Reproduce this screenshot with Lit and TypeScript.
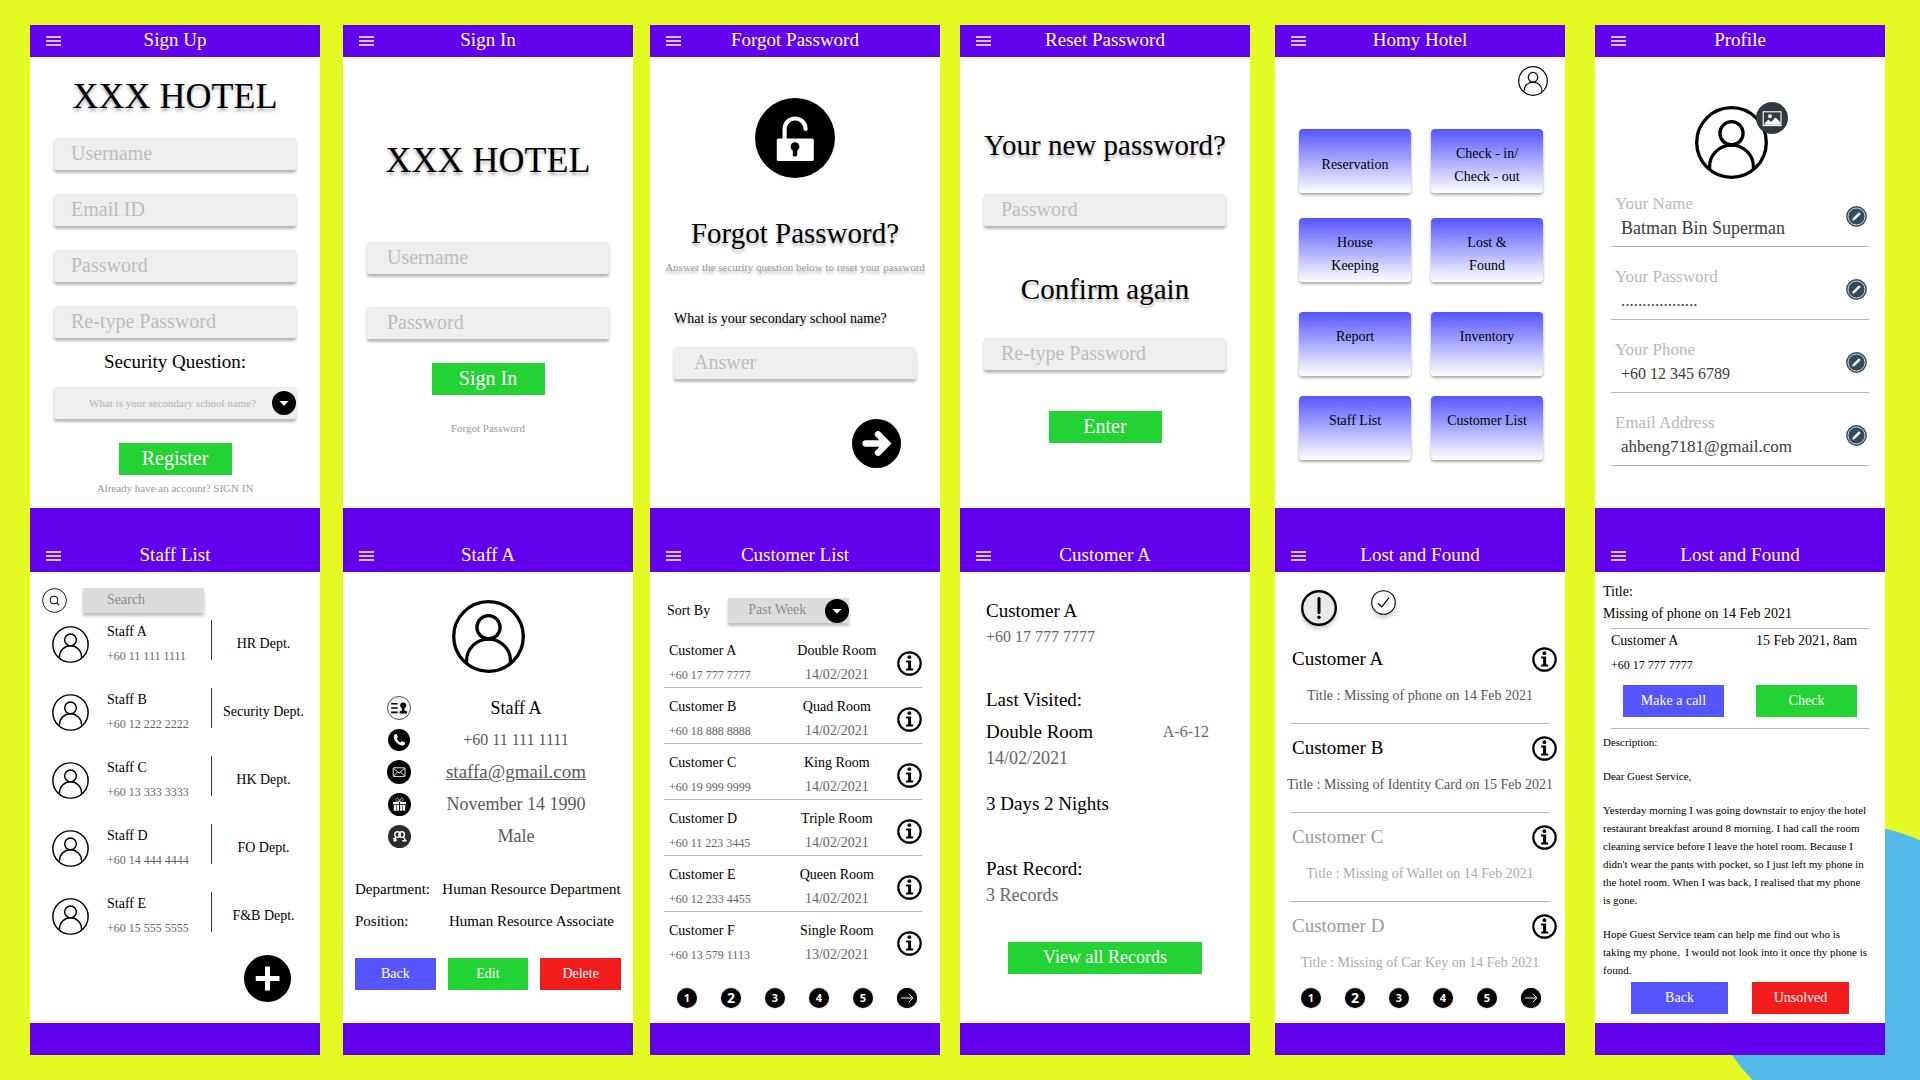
import { LitElement, html, css, svg, TemplateResult } from "lit";
import { customElement } from "lit/decorators.js";

interface Staff { name: string; phone: string; dept: string }
interface Customer { name: string; phone: string; room: string; date: string }
interface Report { name: string; title: string; closed: boolean }
interface ProfileRow { id: string; label: string; value: string; size: string }

const STAFF: Staff[] = [
  { name: "Staff A", phone: "+60 11 111 1111", dept: "HR Dept." },
  { name: "Staff B", phone: "+60 12 222 2222", dept: "Security Dept." },
  { name: "Staff C", phone: "+60 13 333 3333", dept: "HK Dept." },
  { name: "Staff D", phone: "+60 14 444 4444", dept: "FO Dept." },
  { name: "Staff E", phone: "+60 15 555 5555", dept: "F&B Dept." },
];

const CUSTOMERS: Customer[] = [
  { name: "Customer A", phone: "+60 17 777 7777", room: "Double Room", date: "14/02/2021" },
  { name: "Customer B", phone: "+60 18 888 8888", room: "Quad Room", date: "14/02/2021" },
  { name: "Customer C", phone: "+60 19 999 9999", room: "King Room", date: "14/02/2021" },
  { name: "Customer D", phone: "+60 11 223 3445", room: "Triple Room", date: "14/02/2021" },
  { name: "Customer E", phone: "+60 12 233 4455", room: "Queen Room", date: "14/02/2021" },
  { name: "Customer F", phone: "+60 13 579 1113", room: "Single Room", date: "13/02/2021" },
];

const REPORTS: Report[] = [
  { name: "Customer A", title: "Title : Missing of phone on 14 Feb 2021", closed: false },
  { name: "Customer B", title: "Title : Missing of Identity Card on 15 Feb 2021", closed: false },
  { name: "Customer C", title: "Title : Missing of Wallet on 14 Feb 2021", closed: true },
  { name: "Customer D", title: "Title : Missing of Car Key on 14 Feb 2021", closed: true },
];

const PROFILE: ProfileRow[] = [
  { id: "pf-name", label: "Your Name", value: "Batman Bin Superman", size: "t18" },
  { id: "pf-pass", label: "Your Password", value: "..................", size: "t17" },
  { id: "pf-phone", label: "Your Phone", value: "+60 12 345 6789", size: "t16" },
  { id: "pf-mail", label: "Email Address", value: "ahbeng7181@gmail.com", size: "t17" },
];

const icon = (cls: string, box: number, body: TemplateResult | unknown) =>
  html`<svg class="ic ${cls}" viewBox="0 0 ${box} ${box}" aria-hidden="true">${body}</svg>`;

const avatar = (cls: string) => icon(cls, 73, svg`
  <g class="person-lines" fill="none" stroke="#000">
    <circle cx="36.5" cy="36.5" r="34.8"/>
    <circle cx="36.5" cy="27.3" r="11.6"/>
    <path d="M14.6 62.5V60.5A21.9 21.4 0 0 1 58.4 60.5V62.5"/>
  </g>`);

const menuIcon = html`<svg class="menu-ic" viewBox="0 0 15 10" aria-hidden="true">
  <path d="M0 1H15M0 5H15M0 9H15" stroke="#fff" stroke-width="1.4"/></svg>`;

const infoIcon = icon("s25", 25, svg`
  <circle cx="12.5" cy="12.5" r="11.2" fill="none" stroke="#000" stroke-width="2.2"/>
  <circle cx="12.4" cy="6.2" r="1.9"/>
  <path d="M9.1 9.4H14.1V17.4H16.1V19.4H9.1V17.4H11.1V11.4H9.1Z"/>`);

const caretIcon = icon("s24 caret", 24, svg`
  <circle cx="12" cy="12" r="12"/><path d="M7.4 10H16.6L12 14.8Z" fill="#fff"/>`);

const lockIcon = icon("s80", 80, svg`
  <circle cx="40" cy="40" r="40"/>
  <path d="M29.6 42V31A10.5 10.5 0 0 1 50.6 31" fill="none" stroke="#fff" stroke-width="4.2" stroke-linecap="round"/>
  <rect x="21.8" y="40.6" width="37" height="22.4" rx="1.6" fill="#fff"/>
  <circle cx="40" cy="48.6" r="4.4"/>
  <path d="M40 50V56.4" stroke="#000" stroke-width="4.4" stroke-linecap="round"/>`);

const nextIcon = icon("s49", 49, svg`
  <circle cx="24.5" cy="24.5" r="24.5"/>
  <path d="M13.6 24.5H34M26 15.3L35 24.5L26 33.7" fill="none" stroke="#fff" stroke-width="6.4" stroke-linecap="round"/>`);

const plusIcon = icon("s47", 47, svg`
  <circle cx="23.5" cy="23.5" r="23.5"/>
  <path d="M23.5 11.5V35.5M11.7 23.5H35.5" stroke="#fff" stroke-width="5"/>`);

const searchIcon = icon("s25", 25, svg`
  <g fill="none" stroke="#000">
    <circle cx="12.5" cy="12.5" r="11.9" stroke-width=".9"/>
    <circle cx="12" cy="12" r="3.9" stroke-width="1"/>
    <path d="M14.8 14.8L17.2 17.2" stroke-width="1.1"/>
  </g>`);

const editIcon = icon("s21", 21, svg`
  <circle cx="10.5" cy="10.5" r="10.4" fill="#34495c"/>
  <circle cx="10.5" cy="10.5" r="8.5" fill="none" stroke="#fff" stroke-width=".8"/>
  <path d="M12.9 6.2L14.8 8.1L8.6 14.1L6.3 14.8L6.9 12.3Z" fill="#fff"/>`);

const imageIcon = icon("badge", 32, svg`
  <circle cx="16" cy="16" r="16" fill="#2e3a40"/>
  <rect x="7.2" y="9.8" width="17.8" height="13.8" fill="none" stroke="#fff" stroke-width="1.1"/>
  <circle cx="14" cy="14.2" r="2" fill="#fff"/>
  <path d="M8.6 22.8V21.2L12.4 17.4L15 20L19.6 15.4L24.4 20.2V22.8Z" fill="#fff"/>`);

const idIcon = icon("s24", 24, svg`
  <circle cx="12" cy="12" r="11.5" fill="#f4f4f4" stroke="#222" stroke-width=".8"/>
  <path d="M4.2 7.8H10.6M4.2 12H10.6M4.2 16.4H10.6" stroke="#000" stroke-width="1.6"/>
  <circle cx="16.2" cy="9.6" r="3"/>
  <path d="M15 12H17.4V14.4L20 15.4V17.4H12.6V15.4L15 14.4Z"/>`);

const phoneIcon = icon("s22", 24, svg`
  <circle cx="12" cy="12" r="12"/>
  <path d="M7.6 5.6L9.4 5.4L10.9 9L9.5 10.4C10.2 12.2 11.8 13.8 13.6 14.6L15.1 13.1L18.6 14.8L18.4 16.7C17.6 18.2 15.4 18.4 13.4 17.5C10 16 7.6 13.4 6.4 10C5.9 8.2 6.4 6.4 7.6 5.6Z" fill="#fff"/>`);

const mailIcon = icon("s24", 24, svg`
  <circle cx="12" cy="12" r="12"/>
  <g fill="none" stroke="#fff" stroke-width=".9">
    <rect x="6.2" y="7.8" width="11.8" height="8.8" rx=".6"/>
    <path d="M6.4 8.2L12.1 13L17.8 8.2M6.6 16.2L10.6 11.9M17.6 16.2L13.6 11.9"/>
  </g>`);

const giftIcon = icon("s23", 24, svg`
  <circle cx="12" cy="12" r="12"/>
  <path d="M5.2 9.4H11.4V11.8H5.2ZM12.6 9.4H18.8V11.8H12.6ZM6 12.4H8.8V18.6H6ZM9.4 12.4H11.4V18.6H9.4ZM12.6 12.4H14.6V18.6H12.6ZM15.2 12.4H18V18.6H15.2Z" fill="#fff"/>
  <path d="M12 9C9 9 7.4 7.6 8.4 5.8C9.6 4.4 11.4 6 12 9C12.6 6 14.4 4.4 15.6 5.8C16.6 7.6 15 9 12 9" fill="none" stroke="#ddd" stroke-width=".9"/>`);

const genderIcon = icon("s23", 24, svg`
  <circle cx="12" cy="12" r="12" fill="#2b2b2b"/>
  <g fill="none" stroke="#fff" stroke-width="1.5">
    <circle cx="9.9" cy="10" r="2.9"/><circle cx="14.3" cy="10" r="2.9"/>
    <path d="M8.2 12.4L6 16.6M5.4 14L9.2 16M16 12.4L18.4 16.4M14.8 16.4H19.4M6.6 17.4L8.4 15.2"/>
  </g>`);

const alertIcon = icon("s36", 36, svg`
  <circle cx="18" cy="18" r="16.8" fill="#e9e9e9" stroke="#000" stroke-width="2.4"/>
  <path d="M18 8.6V22.4" stroke="#000" stroke-width="3" stroke-linecap="round"/>
  <circle cx="18" cy="27.2" r="1.7"/>`);

const checkIcon = icon("s25", 25, svg`
  <circle cx="12.5" cy="12.5" r="11.8" fill="#fff" stroke="#000" stroke-width="1.1"/>
  <path d="M7 13.2L10.8 16.9L18 7.6" fill="none" stroke="#000" stroke-width="1.2"/>`);

const pageArrow = icon("s20", 20, svg`
  <circle cx="10" cy="10" r="10"/>
  <path d="M4 10H15.4M11.8 5.8L15.8 10L11.8 14.2" fill="none" stroke="#fff" stroke-width="1"/>`);

@customElement("app-root")
export class AppRoot extends LitElement {
  static styles = css`
    :host {
      display: block;
      font-family: "Liberation Serif", "Times New Roman", serif;
      color: #000;
    }
    * { box-sizing: border-box; margin: 0; padding: 0; }
    button, input, select { font: inherit; color: inherit; border: 0; background: none; border-radius: 0; min-width: 0; }
    button { cursor: pointer; }
    ul { list-style: none; }
    a { color: inherit; text-decoration: none; }

    .board {
      position: relative;
      overflow: hidden;
      display: flex;
      min-height: 100vh;
      padding: 25px 35px 25px 30px;
      background: #e3fb23;
    }
    .blob {
      position: absolute;
      right: -84px;
      bottom: -42px;
      width: 296px;
      height: 296px;
      border-radius: 50%;
      background: #52b9e9;
    }
    .column {
      position: relative;
      flex: 1 1 0;
      min-width: 0;
      display: grid;
      grid-template-rows: 32px 1fr 64px 1fr 32px;
      grid-template-columns: minmax(0, 1fr);
    }
    .column.c2 { margin-left: 23px; }
    .column.c3 { margin-left: 17px; }
    .column.c4 { margin-left: 20px; }
    .column.c5 { margin-left: 25px; }
    .column.c6 { margin-left: 30px; }

    .bar {
      display: grid;
      grid-template-columns: 31px 1fr 31px;
      align-items: end;
      background: #6200ee;
      color: #fff;
    }
    .bar h2 { font-size: 19px; font-weight: 400; line-height: 30px; padding-bottom: 2px; text-align: center; }
    .menu { height: 32px; padding-left: 16px; display: flex; align-items: center; }
    .menu-ic { display: block; width: 15px; height: 10px; }
    .foot { background: #6200ee; }

    .view { background: #fff; display: flex; flex-direction: column; align-items: stretch; }
    .ic { display: block; flex: none; }
    .person-lines { stroke-width: 2.9; }
    .s73 .person-lines { stroke-width: 3.3; }
    .s20 { width: 20px; height: 20px; }
    .s21 { width: 21px; height: 21px; }
    .s22 { width: 22px; height: 22px; }
    .s23 { width: 23px; height: 23px; }
    .s24 { width: 24px; height: 24px; }
    .s25 { width: 25px; height: 25px; }
    .s30 { width: 30px; height: 30px; }
    .s36 { width: 36px; height: 36px; }
    .s37 { width: 37px; height: 37px; }
    .s47 { width: 47px; height: 47px; }
    .s49 { width: 49px; height: 49px; }
    .s73 { width: 73px; height: 73px; }
    .s80 { width: 80px; height: 80px; }
    .t16 { font-size: 16px; }
    .t17 { font-size: 17px; }
    .t18 { font-size: 18px; }
    .t19 { font-size: 19px; }

    .brand { font-size: 36px; font-weight: 400; line-height: 48px; text-align: center; text-shadow: 0 3px 3px rgba(0, 0, 0, .3); }
    .heading { font-size: 29px; font-weight: 400; line-height: 40px; text-align: center; text-shadow: 0 3px 3px rgba(0, 0, 0, .3); }
    .form { display: flex; flex-direction: column; padding: 0 24px; }
    .field {
      height: 32px;
      width: 100%;
      padding: 0 17px 2px;
      font-size: 20px;
      background: #eee;
      border-radius: 2px;
      box-shadow: 0 3px 3px rgba(0, 0, 0, .28);
    }
    .field::placeholder { color: #bcbcbc; opacity: 1; }
    .roomy .field { padding: 0 20px 2px; }
    .picker { display: grid; grid-template-columns: 1fr; align-items: center; }
    .picker > * { grid-area: 1 / 1; }
    .picker .caret { justify-self: end; pointer-events: none; }
    .picker select { appearance: none; cursor: pointer; }
    .field.question { padding: 0 24px 0 35px; font-size: 11px; color: #b4b4b4; }
    .cta {
      align-self: center;
      width: 113px;
      height: 32px;
      padding-bottom: 2px;
      font-size: 20px;
      line-height: 28px;
      color: #fff;
      background: #23d333;
    }
    .note { align-self: center; font-size: 11px; line-height: 24px; color: #999; }

    .signup { padding-top: 15px; }
    .signup .form { gap: 24px; padding-top: 18px; }
    .signup .form.second { gap: 0; padding-top: 12px; }
    .security { font-size: 19px; line-height: 24px; text-align: center; margin-bottom: 13px; }
    .signup .cta { margin: 24px 0 1px; }

    .signin { padding-top: 79px; }
    .signin .form { gap: 33px; padding-top: 58px; }
    .signin .cta { margin: 24px 0 21px; }

    .forgot { padding-top: 41px; }
    .forgot .s80 { align-self: center; margin-bottom: 35px; }
    .forgot .hint { font-size: 11px; line-height: 24px; margin: 2px 0 28px; text-align: center; color: #999; text-shadow: 0 3px 3px rgba(0, 0, 0, .3); white-space: nowrap; }
    .forgot label { font-size: 14px; line-height: 24px; margin-bottom: 16px; text-shadow: 0 3px 3px rgba(0, 0, 0, .3); }
    .forgot .go { align-self: flex-end; margin: 40px 39px 0 0; border-radius: 50%; }

    .reset { padding-top: 68px; }
    .reset .form { padding-top: 29px; padding-bottom: 43px; }
    .reset .form.last { padding-bottom: 41px; }

    .home { padding-top: 9px; }
    .home .me { align-self: flex-end; margin-right: 17px; }
    .tiles {
      display: grid;
      grid-template-columns: 1fr 1fr;
      grid-template-rows: 89px 94px 84px 64px;
      column-gap: 20px;
      align-items: start;
      padding: 33px 22px 0 24px;
    }
    .tile {
      height: 64px;
      display: flex;
      justify-content: center;
      align-items: flex-start;
      padding-top: 13px;
      font-size: 14px;
      line-height: 23px;
      text-align: center;
      white-space: pre-line;
      border-radius: 4px;
      background: linear-gradient(#5555ff, #fff);
      box-shadow: 0 2px 3px rgba(0, 0, 0, .35);
    }
    .tile.low { padding-top: 24px; }

    .profile { padding: 49px 16px 0; }
    .portrait { position: relative; width: 73px; align-self: center; margin: 0 17px 13px 0; }
    .badge { position: absolute; left: 61px; top: -4px; width: 32px; height: 32px; }
    .rows { display: flex; flex-direction: column; gap: 18px; }
    .prow { display: flex; align-items: center; justify-content: space-between; padding: 0 2px 6px 4px; border-bottom: 1px solid #b4b4b4; }
    .prow div { display: flex; flex-direction: column; min-width: 0; flex: 1; }
    .prow label { font-size: 17px; line-height: 24px; color: #b8b8b8; }
    .prow input { height: 24px; padding-left: 6px; color: #3c3c3c; width: 100%; }

    .staff { padding-top: 16px; }
    .search { display: flex; gap: 16px; padding-left: 12px; margin-bottom: 7px; }
    .search input, .sort select {
      width: 121px;
      height: 25px;
      padding: 0 0 2px 24px;
      font-size: 14px;
      color: #8c8c8c;
      background: #dcdcdc;
      box-shadow: 0 3px 3px rgba(0, 0, 0, .25);
    }
    .search input::placeholder { color: #8c8c8c; opacity: 1; }
    .people { display: flex; flex-direction: column; gap: 20px; padding: 0 5px 0 22px; }
    .person { display: grid; grid-template-columns: 37px 122px 1px 1fr; align-items: center; }
    .person .who { padding-left: 18px; }
    .name { font-size: 14px; line-height: 24px; white-space: nowrap; }
    .sub { font-size: 12px; line-height: 24px; color: #666; white-space: nowrap; }
    .dept { font-size: 14px; line-height: 24px; text-align: center; }
    .person .split { align-self: start; height: 40px; border-left: 1px solid #333; }
    .staff .add { align-self: flex-end; margin: 15px 29px 0 0; border-radius: 50%; }

    .detail { padding: 28px 12px 0; }
    .detail > .s73 { align-self: center; margin-bottom: 19px; }
    .facts { display: grid; grid-template-columns: 88px 1fr; padding: 0 32px 0 0; }
    .facts li { display: contents; }
    .facts .cell { height: 32px; display: flex; align-items: center; justify-content: center; color: #5a5a5a; }
    .facts .cell.strong { color: #000; }
    .facts a { text-decoration: underline; }
    .job { display: grid; grid-template-columns: auto 1fr; column-gap: 12px; font-size: 15px; line-height: 32px; padding: 21px 0; }
    .job dd { text-align: center; white-space: nowrap; }
    .trio { display: grid; grid-template-columns: 1fr 1fr 1fr; gap: 12px; }
    .btn { height: 32px; font-size: 14px; line-height: 30px; color: #fff; background: #5555ff; }
    .btn.green { background: #23d333; }
    .btn.red { background: #f21c1c; }

    .customers { padding: 26px 18px 0 14px; }
    .sort { display: flex; align-items: center; gap: 18px; padding-left: 3px; font-size: 14px; margin-bottom: 9px; }
    .sort select { padding-left: 20px; }
    table { width: 100%; border-collapse: collapse; table-layout: fixed; }
    td { padding-top: 7px; border-bottom: 1px solid #b4b4b4; vertical-align: middle; }
    tr:last-child td { border-bottom: 0; }
    td.w1 { width: 47%; padding-left: 5px; }
    td.w2 { width: 40%; text-align: center; }
    td.w3 { width: 13%; }
    td.w3 button { display: block; margin-left: auto; border-radius: 50%; }
    .date { font-size: 14px; }
    .pages { display: flex; gap: 24px; }
    .pages button {
      width: 20px;
      height: 20px;
      border-radius: 50%;
      background: #000;
      color: #fff;
      font: 700 11px/20px "Open Sans", "Liberation Sans", sans-serif;
      text-align: center;
      box-shadow: 0 0 2px rgba(0, 0, 0, .3);
    }
    .pages .current { font-size: 14px; }
    .customers .pages { padding: 21px 0 0 13px; }

    .record { padding: 26px 26px 0; font-size: 19px; line-height: 26px; }
    .record .soft { font-size: 18px; color: #666; }
    .record .num { font-size: 16px; }
    .record .g1 { margin-top: 37px; }
    .record .g2 { margin-top: 6px; display: flex; justify-content: space-between; padding-right: 15px; }
    .record .g3 { margin-top: 20px; }
    .record .g4 { margin-top: 39px; }
    .record .cta { width: 194px; margin-top: 34px; font-size: 18px; }

    .lost { padding-top: 18px; }
    .tabs { display: flex; align-items: flex-start; gap: 34px; padding-left: 26px; margin-bottom: 9px; }
    .tabs button { border-radius: 50%; box-shadow: 0 3px 4px rgba(0, 0, 0, .2); }
    .report { padding-top: 11px; }
    .report .line { display: flex; justify-content: space-between; align-items: center; height: 26px; padding: 0 8px 0 17px; font-size: 19px; }
    .report .title { margin: 12px 0 15px; font-size: 14px; line-height: 24px; text-align: center; color: #555; white-space: nowrap; }
    .report.closed .line { color: #999; }
    .report.closed .title { color: #aaa; }
    .report:last-child .title { margin-bottom: 13px; }
    .rule { height: 1px; background: #b4b4b4; margin: 0 16px; }
    .lost .pages { padding-left: 26px; }

    .case { padding-top: 9px; font-size: 14px; }
    .subject { line-height: 22px; padding: 0 8px 3px; }
    .caller { display: grid; grid-template-columns: 145fr 129fr; line-height: 24px; padding: 0 0 0 16px; }
    .caller .num { font-size: 12px; }
    .pair { display: grid; grid-template-columns: 101px 101px; gap: 32px; padding: 8px 28px 11px; }
    .pair.end { grid-template-columns: 97px 97px; gap: 24px; padding: 3px 36px 0; }
    .letter { padding: 4px 8px 0; font-size: 11px; line-height: 18px; display: flex; flex-direction: column; gap: 16px; white-space: pre-line; }
  `;

  private bar(title: string) {
    return html`<header class="bar">
      <button class="menu" aria-label="Menu">${menuIcon}</button>
      <h2>${title}</h2>
    </header>`;
  }

  private input(label: string, type = "text") {
    return html`<input class="field" type=${type} placeholder=${label} aria-label=${label} />`;
  }

  private pages() {
    return html`<nav class="pages" aria-label="Pages">
      ${[1, 2, 3, 4, 5].map((n) => html`<button class=${n === 2 ? "current" : ""}>${n}</button>`)}
      <button aria-label="Next page">${pageArrow}</button>
    </nav>`;
  }

  private signUp() {
    return html`<section class="view signup">
      <h1 class="brand">XXX HOTEL</h1>
      <div class="form">
        ${this.input("Username")}${this.input("Email ID", "email")}
        ${this.input("Password", "password")}${this.input("Re-type Password", "password")}
      </div>
      <div class="form second">
        <label class="security" for="sq">Security Question:</label>
        <div class="picker">
          <select id="sq" class="field question"><option>What is your secondary school name?</option></select>
          ${caretIcon}
        </div>
      </div>
      <button class="cta">Register</button>
      <a class="note" href="#signin">Already have an account? SIGN IN</a>
    </section>`;
  }

  private signIn() {
    return html`<section class="view signin">
      <h1 class="brand">XXX HOTEL</h1>
      <div class="form roomy">${this.input("Username")}${this.input("Password", "password")}</div>
      <button class="cta">Sign In</button>
      <a class="note" href="#forgot">Forgot Password</a>
    </section>`;
  }

  private forgot() {
    return html`<section class="view forgot">
      ${lockIcon}
      <h1 class="heading">Forgot Password?</h1>
      <p class="hint">Answer the security question below to reset your password</p>
      <div class="form roomy">
        <label for="answer">What is your secondary school name?</label>
        <input id="answer" class="field" type="text" placeholder="Answer" />
      </div>
      <button class="go" aria-label="Continue">${nextIcon}</button>
    </section>`;
  }

  private reset() {
    return html`<section class="view reset">
      <h1 class="heading">Your new password?</h1>
      <div class="form">${this.input("Password", "password")}</div>
      <h1 class="heading">Confirm again</h1>
      <div class="form last">${this.input("Re-type Password", "password")}</div>
      <button class="cta">Enter</button>
    </section>`;
  }

  private home() {
    const tiles = ["Reservation", "Check - in/\nCheck - out", "House\nKeeping", "Lost &\nFound",
      "Report", "Inventory", "Staff List", "Customer List"];
    return html`<section class="view home">
      <button class="me" aria-label="Profile">${avatar("s30")}</button>
      <nav class="tiles">
        ${tiles.map((t, i) => html`<button class="tile ${i === 0 ? "low" : ""}">${t}</button>`)}
      </nav>
    </section>`;
  }

  private profile() {
    return html`<section class="view profile">
      <div class="portrait">${avatar("s73")}${imageIcon}</div>
      <div class="rows">
        ${PROFILE.map((r) => html`<div class="prow">
          <div>
            <label for=${r.id}>${r.label}</label>
            <input id=${r.id} class=${r.size} type="text" .value=${r.value} />
          </div>
          <button aria-label="Edit ${r.label}">${editIcon}</button>
        </div>`)}
      </div>
    </section>`;
  }

  private staffList() {
    return html`<section class="view staff">
      <div class="search">
        <button aria-label="Search">${searchIcon}</button>
        <input type="text" placeholder="Search" aria-label="Search staff" />
      </div>
      <ul class="people">
        ${STAFF.map((s) => html`<li class="person">
          ${avatar("s37")}
          <div class="who"><p class="name">${s.name}</p><p class="sub">${s.phone}</p></div>
          <span class="split"></span>
          <p class="dept">${s.dept}</p>
        </li>`)}
      </ul>
      <button class="add" aria-label="Add staff">${plusIcon}</button>
    </section>`;
  }

  private staffDetail() {
    return html`<section class="view detail">
      ${avatar("s73")}
      <ul class="facts">
        <li><span class="cell">${idIcon}</span><span class="cell strong t18">Staff A</span></li>
        <li><span class="cell">${phoneIcon}</span><span class="cell t16">+60 11 111 1111</span></li>
        <li><span class="cell">${mailIcon}</span><span class="cell t19"><a href="mailto:staffa@gmail.com">staffa@gmail.com</a></span></li>
        <li><span class="cell">${giftIcon}</span><span class="cell t18">November 14 1990</span></li>
        <li><span class="cell">${genderIcon}</span><span class="cell t18">Male</span></li>
      </ul>
      <dl class="job">
        <dt>Department:</dt><dd>Human Resource Department</dd>
        <dt>Position:</dt><dd>Human Resource Associate</dd>
      </dl>
      <div class="trio">
        <button class="btn">Back</button>
        <button class="btn green">Edit</button>
        <button class="btn red">Delete</button>
      </div>
    </section>`;
  }

  private customerList() {
    return html`<section class="view customers">
      <div class="sort">
        <label for="sort">Sort By</label>
        <div class="picker"><select id="sort"><option>Past Week</option></select>${caretIcon}</div>
      </div>
      <table>
        <tbody>
          ${CUSTOMERS.map((c) => html`<tr>
            <td class="w1"><p class="name">${c.name}</p><p class="sub">${c.phone}</p></td>
            <td class="w2"><p class="name">${c.room}</p><p class="sub date">${c.date}</p></td>
            <td class="w3"><button aria-label="Details of ${c.name}">${infoIcon}</button></td>
          </tr>`)}
        </tbody>
      </table>
      ${this.pages()}
    </section>`;
  }

  private customerDetail() {
    return html`<section class="view record">
      <p>Customer A</p>
      <p class="soft num">+60 17 777 7777</p>
      <p class="g1">Last Visited:</p>
      <div class="g2"><span>Double Room</span><span class="soft num">A-6-12</span></div>
      <p class="soft">14/02/2021</p>
      <p class="g3">3 Days 2 Nights</p>
      <p class="g4">Past Record:</p>
      <p class="soft">3 Records</p>
      <button class="cta">View all Records</button>
    </section>`;
  }

  private lostList() {
    return html`<section class="view lost">
      <div class="tabs">
        <button aria-label="Open reports">${alertIcon}</button>
        <button aria-label="Solved reports">${checkIcon}</button>
      </div>
      <div>
        ${REPORTS.map((r, i) => html`<article class="report ${r.closed ? "closed" : ""}">
          <div class="line"><span>${r.name}</span><button aria-label="Details of ${r.name}">${infoIcon}</button></div>
          <p class="title">${r.title}</p>
          ${i < REPORTS.length - 1 ? html`<div class="rule"></div>` : ""}
        </article>`)}
      </div>
      ${this.pages()}
    </section>`;
  }

  private lostDetail() {
    const body = "Yesterday morning I was going downstair to enjoy the hotel\nrestaurant breakfast around 8 morning. I had call the room\ncleaning service before I leave the hotel room. Because I\ndidn't wear the pants with pocket, so I just left my phone in\nthe hotel room. When I was back, I realised that my phone\nis gone.";
    const close = "Hope Guest Service team can help me find out who is\ntaking my phone.\u00a0 I would not look into it once thy phone is\nfound.";
    return html`<section class="view case">
      <div class="subject"><p>Title:</p><p>Missing of phone on 14 Feb 2021</p></div>
      <div class="rule"></div>
      <div class="caller">
        <span>Customer A</span><span>15 Feb 2021, 8am</span>
        <span class="num">+60 17 777 7777</span>
      </div>
      <div class="pair"><button class="btn">Make a call</button><button class="btn green">Check</button></div>
      <div class="rule"></div>
      <div class="letter"><p>Description:</p><p>Dear Guest Service,</p><p>${body}</p><p>${close}</p></div>
      <div class="pair end"><button class="btn">Back</button><button class="btn red">Unsolved</button></div>
    </section>`;
  }

  private column(n: number, top: string, a: TemplateResult, bottom: string, b: TemplateResult) {
    return html`<div class="column c${n}">
      ${this.bar(top)}${a}${this.bar(bottom)}${b}
      <footer class="foot"></footer>
    </div>`;
  }

  render() {
    return html`<main class="board">
      <div class="blob"></div>
      ${this.column(1, "Sign Up", this.signUp(), "Staff List", this.staffList())}
      ${this.column(2, "Sign In", this.signIn(), "Staff A", this.staffDetail())}
      ${this.column(3, "Forgot Password", this.forgot(), "Customer List", this.customerList())}
      ${this.column(4, "Reset Password", this.reset(), "Customer A", this.customerDetail())}
      ${this.column(5, "Homy Hotel", this.home(), "Lost and Found", this.lostList())}
      ${this.column(6, "Profile", this.profile(), "Lost and Found", this.lostDetail())}
    </main>`;
  }
}
